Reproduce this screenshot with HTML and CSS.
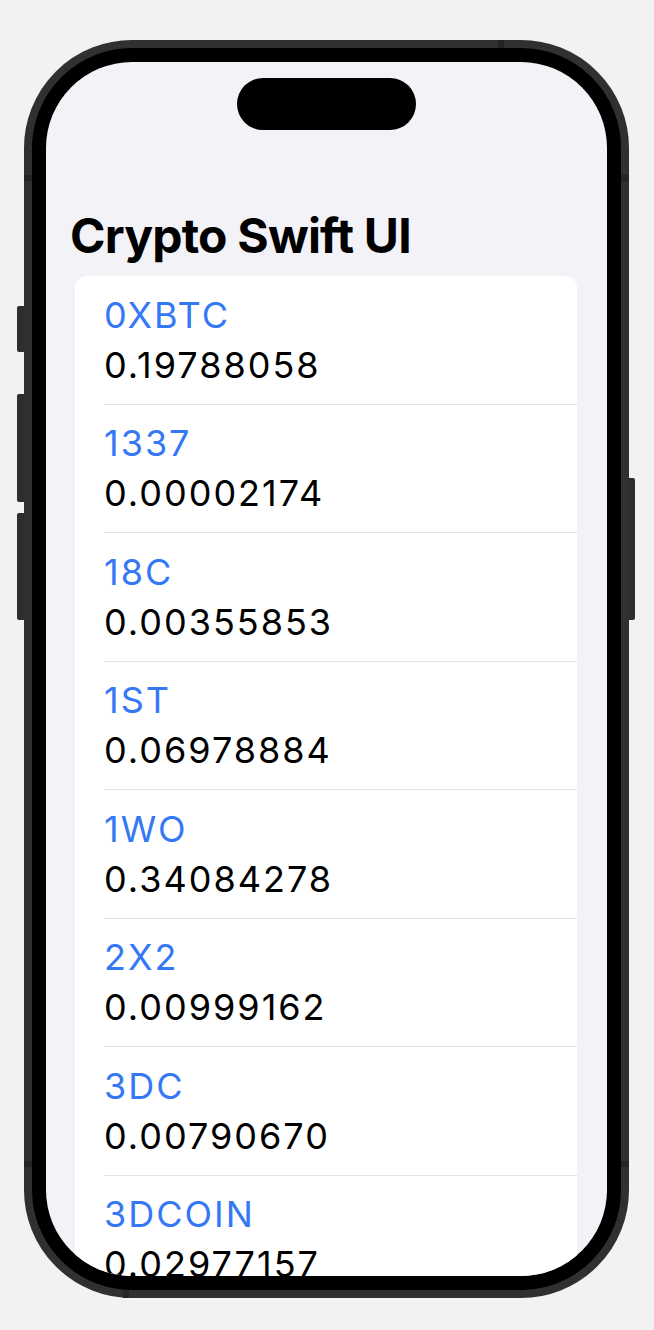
FILE: index.html
```html
<!DOCTYPE html>
<html lang="en">
<head>
<meta charset="utf-8">
<title>Crypto Swift UI</title>
<link rel="stylesheet" href="styles.css">
</head>
<body>
<div class="stage">
  <div class="phone">
    <span class="btn btn-action"></span>
    <span class="btn btn-vol-up"></span>
    <span class="btn btn-vol-down"></span>
    <span class="btn btn-power"></span>
    <span class="band band-lt"></span>
    <span class="band band-rt"></span>
    <span class="band band-lb"></span>
    <span class="band band-rb"></span>
    <span class="band band-top"></span>
    <span class="band band-bottom"></span>
    <div class="screen">
      <div class="island"></div>
      <h1 class="title">Crypto Swift UI</h1>
      <ul class="card">
        <li class="row"><span class="sym">0XBTC</span><span class="price">0.19788058</span></li>
        <li class="row"><span class="sym">1337</span><span class="price">0.00002174</span></li>
        <li class="row"><span class="sym">18C</span><span class="price">0.00355853</span></li>
        <li class="row"><span class="sym">1ST</span><span class="price">0.06978884</span></li>
        <li class="row"><span class="sym">1WO</span><span class="price">0.34084278</span></li>
        <li class="row"><span class="sym">2X2</span><span class="price">0.00999162</span></li>
        <li class="row"><span class="sym">3DC</span><span class="price">0.00790670</span></li>
        <li class="row"><span class="sym">3DCOIN</span><span class="price">0.02977157</span></li>
      </ul>
    </div>
  </div>
</div>
</body>
</html>
```

FILE: styles.css
```css
* { box-sizing: border-box; }

html, body {
  margin: 0;
  padding: 0;
  background: #f2f2f2;
}

body {
  font-family: Inter, "Liberation Sans", sans-serif;
  width: 654px;
  height: 1330px;
  overflow: hidden;
}

.stage {
  padding: 40px 0 0 24px;
}

.phone {
  position: relative;
  width: 605px;
  height: 1258px;
  padding: 14px;
  background: #000;
  border: 8px solid #303030;
  border-radius: 108px;
}

/* side hardware buttons */
.btn {
  position: absolute;
  background: #2e2e2e;
  width: 8px;
}
.btn-action   { left: -15px; top: 258px; height: 46px; border-radius: 2px 0 0 2px; }
.btn-vol-up   { left: -15px; top: 346px; height: 108px; border-radius: 2px 0 0 2px; }
.btn-vol-down { left: -15px; top: 465px; height: 107px; border-radius: 2px 0 0 2px; }
.btn-power    { right: -14px; top: 430px; height: 142px; width: 6px; border-radius: 0 2px 2px 0; }

/* antenna bands on the frame */
.band {
  position: absolute;
  background: #242424;
}
.band-lt { left: -8px; top: 127px; width: 8px; height: 6px; }
.band-rt { right: -8px; top: 127px; width: 8px; height: 6px; }
.band-lb { left: -8px; top: 1113px; width: 8px; height: 6px; }
.band-rb { right: -8px; top: 1113px; width: 8px; height: 6px; }
.band-top { left: 466px; top: -8px; width: 6px; height: 8px; }
.band-bottom { left: 91px; bottom: -8px; width: 6px; height: 8px; }

.screen {
  width: 561px;
  height: 1214px;
  background: #f2f2f7;
  border-radius: 86px;
  overflow: hidden;
  padding-top: 16px;
}

.island {
  width: 179px;
  height: 52px;
  margin: 0 auto;
  background: #000;
  border-radius: 26px;
}

.title {
  margin: 77px 0 11px 24px;
  font-size: 48px;
  line-height: 58px;
  font-weight: 700;
  color: #000;
  letter-spacing: -0.8px;
}

.card {
  list-style: none;
  margin: 0 30px 0 29px;
  padding: 0;
  background: #fff;
  border-radius: 12px;
}

.row {
  display: flex;
  flex-direction: column;
  margin-left: 29px;
  padding: 13.5px 0 14px;
  border-bottom: 1px solid #e2e2e5;
  font-size: 36px;
  line-height: 50px;
  letter-spacing: 2px;
}

.sym {
  color: #3478f6;
}

.price {
  color: #000;
}
```
